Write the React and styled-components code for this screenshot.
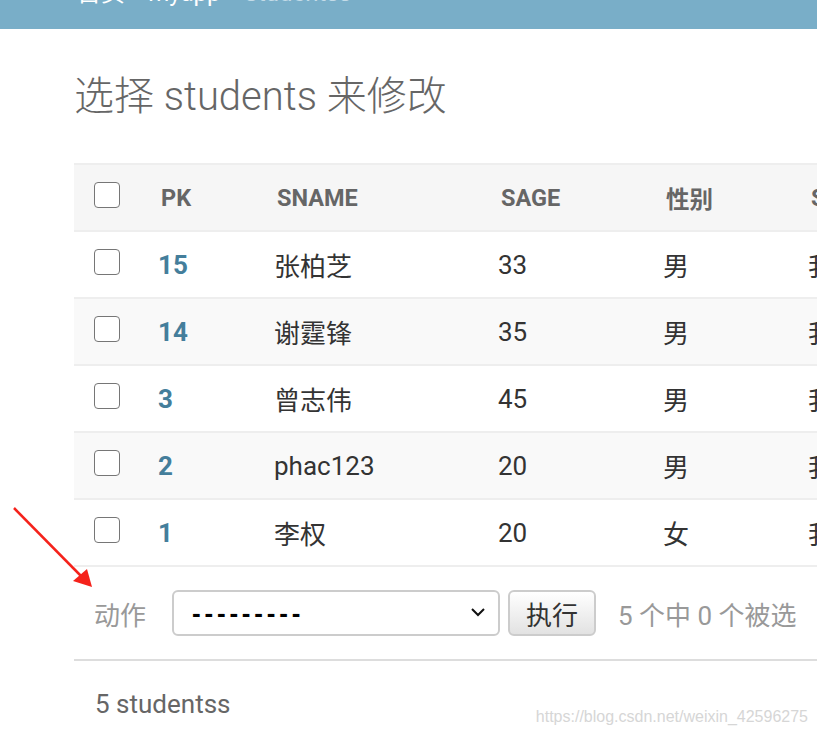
import styled, { createGlobalStyle } from "styled-components";

const GlobalStyle = createGlobalStyle`
  html, body {
    margin: 0;
    padding: 0;
    overflow: hidden;
    background: #fff;
  }
  body {
    font-family: Roboto, "Noto Sans CJK SC", "Liberation Sans", sans-serif;
    color: #333;
  }
`;

const Page = styled.div`
  position: relative;
  width: 817px;
  height: 734px;
  overflow: hidden;
`;

const Breadcrumbs = styled.div`
  height: 29px;
  background: #79aec8;
  padding-left: 77px;
  overflow: hidden;
  color: #fff;
  font-size: 24px;
  line-height: 30px;
`;

const Crumbs = styled.div`
  margin-top: -22px;
  white-space: nowrap;
  display: flex;
  gap: 8px;
`;

const Crumb = styled.span`
  color: ${({ $current }) => ($current ? "#c4dce8" : "#fff")};
`;

const Content = styled.div`
  padding-left: 74px;
`;

const Title = styled.h1`
  margin: 44px 0 42px;
  font-size: 40px;
  font-weight: 300;
  line-height: 48px;
  color: #666;
`;

const Table = styled.table`
  border-collapse: collapse;
  table-layout: fixed;
  width: 916px;
`;

const Col = styled.col`
  width: ${({ $w }) => $w}px;
`;

const HeadRow = styled.tr`
  background: #f6f6f6;
  border-top: 2px solid #eee;
  border-bottom: 2px solid #eee;
`;

const Th = styled.th`
  height: 65px;
  padding: 0 0 0 21px;
  text-align: left;
  font-size: 23.5px;
  font-weight: 700;
  color: #666;
  white-space: nowrap;
`;

const Row = styled.tr`
  background: ${({ $alt }) => ($alt ? "#f9f9f9" : "#fff")};
  border-bottom: 2px solid #eee;
`;

const Td = styled.td`
  height: 65px;
  padding: 0 0 0 18px;
  font-size: 26px;
  color: #333;
  white-space: nowrap;
`;

const CheckCell = styled.td`
  padding: 0 0 6px 20px;
`;

const CheckHead = styled.th`
  padding: 0 0 6px 20px;
  text-align: left;
`;

const Box = styled.input.attrs({ type: "checkbox" })`
  appearance: none;
  display: block;
  margin: 0;
  width: 26px;
  height: 26px;
  border: 1px solid #767676;
  border-radius: 4px;
  background: #fff;
`;

const PkLink = styled.a`
  color: #447e9b;
  font-weight: 700;
  text-decoration: none;
`;

const Actions = styled.div`
  display: flex;
  align-items: center;
  height: 92px;
  padding-left: 20px;
  border-bottom: 2px solid #ddd;
  font-size: 26px;
  color: #999;
`;

const ActionLabel = styled.label`
  margin-right: 26px;
`;

const SelectWrap = styled.div`
  position: relative;
  width: 328px;
  height: 46px;
  margin-right: 8px;
`;

const Select = styled.select`
  appearance: none;
  width: 100%;
  height: 100%;
  border: 2px solid #ccc;
  border-radius: 6px;
  background: #fff;
  padding: 0 0 0 18px;
  font-family: "Liberation Sans", Arial, sans-serif;
  font-size: 26px;
  font-weight: 700;
  color: #000;
  letter-spacing: 3.8px;
`;

const Chevron = styled.svg`
  position: absolute;
  right: 15px;
  top: 18px;
  pointer-events: none;
`;

const Button = styled.button`
  height: 46px;
  width: 88px;
  border: 2px solid #ccc;
  border-radius: 6px;
  background: linear-gradient(#fff, #e2e2e2);
  font-family: "Noto Sans CJK SC", sans-serif;
  font-size: 26px;
  color: #333;
  padding: 0;
  margin-right: 22px;
`;

const Counter = styled.span`
  color: #999;
  font-size: 26px;
`;

const Paginator = styled.p`
  margin: 0;
  padding: 28px 0 0 21px;
  font-size: 26px;
  color: #666;
`;

const Watermark = styled.div`
  position: absolute;
  right: 9px;
  bottom: 8px;
  font-family: "Liberation Sans", Arial, sans-serif;
  font-size: 16px;
  color: #d6d6d6;
`;

const Arrow = styled.svg`
  position: absolute;
  left: 0;
  top: 500px;
`;

const students = [
  { pk: 15, name: "张柏芝", age: 33, sex: "男" },
  { pk: 14, name: "谢霆锋", age: 35, sex: "男" },
  { pk: 3, name: "曾志伟", age: 45, sex: "男" },
  { pk: 2, name: "phac123", age: 20, sex: "男" },
  { pk: 1, name: "李权", age: 20, sex: "女" },
];

export default function App() {
  return (
    <Page>
      <GlobalStyle />
      <Breadcrumbs>
        <Crumbs>
          <Crumb>首页</Crumb>
          <Crumb>›</Crumb>
          <Crumb>myapp</Crumb>
          <Crumb>›</Crumb>
          <Crumb $current>Studentss</Crumb>
        </Crumbs>
      </Breadcrumbs>
      <Content>
        <Title>选择 students 来修改</Title>
        <Table>
          <colgroup>
            <Col $w={66} />
            <Col $w={116} />
            <Col $w={224} />
            <Col $w={165} />
            <Col $w={145} />
            <Col $w={200} />
          </colgroup>
          <thead>
            <HeadRow>
              <CheckHead>
                <Box />
              </CheckHead>
              <Th>PK</Th>
              <Th>SNAME</Th>
              <Th>SAGE</Th>
              <Th>性别</Th>
              <Th>SDESC</Th>
            </HeadRow>
          </thead>
          <tbody>
            {students.map((s, i) => (
              <Row key={s.pk} $alt={i % 2 === 1}>
                <CheckCell>
                  <Box />
                </CheckCell>
                <Td>
                  <PkLink href="#">{s.pk}</PkLink>
                </Td>
                <Td>{s.name}</Td>
                <Td>{s.age}</Td>
                <Td>{s.sex}</Td>
                <Td>我是学生</Td>
              </Row>
            ))}
          </tbody>
        </Table>
        <Actions>
          <ActionLabel>动作</ActionLabel>
          <SelectWrap>
            <Select defaultValue="">
              <option value="">---------</option>
            </Select>
            <Chevron width="14" height="9" viewBox="0 0 14 9">
              <path d="M1 1l6 6 6-6" fill="none" stroke="#111" strokeWidth="2" />
            </Chevron>
          </SelectWrap>
          <Button>执行</Button>
          <Counter>5 个中 0 个被选</Counter>
        </Actions>
        <Paginator>5 studentss</Paginator>
      </Content>
      <Watermark>https://blog.csdn.net/weixin_42596275</Watermark>
      <Arrow width="100" height="95" viewBox="0 0 100 95">
        <line x1="14" y1="8" x2="84" y2="79" stroke="#f5221b" strokeWidth="2.5" />
        <polygon points="92,87 73,81 87,69" fill="#f5221b" />
      </Arrow>
    </Page>
  );
}
